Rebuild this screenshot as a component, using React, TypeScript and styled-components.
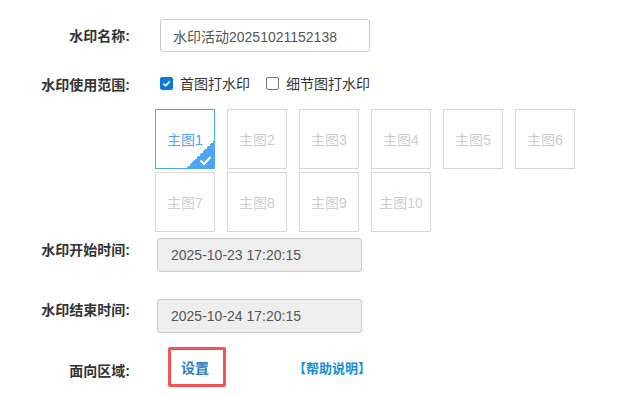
import styled, { createGlobalStyle } from "styled-components";

const GlobalStyle = createGlobalStyle`
  body {
    margin: 0;
    background: #fff;
    font-family: "Liberation Sans", "Noto Sans CJK SC", sans-serif;
  }
`;

const Form = styled.div`
  padding-top: 19px;
  width: 618px;
`;

const Row = styled.div<{ $align?: string; $mt?: number }>`
  display: flex;
  align-items: ${(p) => p.$align || "center"};
  margin-top: ${(p) => p.$mt || 0}px;
`;

const Label = styled.div<{ $pt?: number }>`
  width: 130px;
  flex-shrink: 0;
  text-align: right;
  font-size: 14px;
  font-weight: bold;
  color: #333;
  padding-top: ${(p) => p.$pt || 0}px;
  line-height: 18px;
`;

const TextInput = styled.div`
  margin-left: 30px;
  width: 210px;
  height: 33px;
  box-sizing: border-box;
  border: 1px solid #ccc;
  border-radius: 3px;
  padding-left: 12px;
  display: flex;
  align-items: center;
  font-size: 14px;
  color: #555;
`;

const DateInput = styled.div`
  margin-left: 27px;
  width: 205px;
  height: 34px;
  box-sizing: border-box;
  border: 1px solid #ccc;
  border-radius: 3px;
  background: #eee;
  padding-left: 13px;
  display: flex;
  align-items: center;
  font-size: 14px;
  color: #555;
`;

const Checks = styled.div`
  margin-left: 30px;
  display: flex;
  align-items: center;
  gap: 16px;
`;

const CheckItem = styled.label`
  display: flex;
  align-items: center;
  gap: 7px;
  font-size: 14px;
  color: #333;
`;

const Box = styled.span<{ $on?: boolean }>`
  width: 13px;
  height: 13px;
  box-sizing: border-box;
  border-radius: 2px;
  border: 1px solid ${(p) => (p.$on ? "#0b78d6" : "#767676")};
  background: ${(p) => (p.$on ? "#0b78d6" : "#fff")};
  display: flex;
  align-items: center;
  justify-content: center;
`;

const Thumbs = styled.div`
  margin-left: 155px;
  margin-top: 15px;
  display: grid;
  grid-template-columns: repeat(6, 60px);
  column-gap: 12px;
  row-gap: 3px;
`;

const Thumb = styled.div<{ $on?: boolean }>`
  position: relative;
  width: 60px;
  height: 60px;
  box-sizing: border-box;
  border: 1px solid ${(p) => (p.$on ? "#4ea4f6" : "#dad5d5")};
  color: ${(p) => (p.$on ? "#4ea4f6" : "#ccc")};
  font-size: 14px;
  display: flex;
  align-items: center;
  justify-content: center;
  overflow: hidden;
`;

const Corner = styled.div`
  position: absolute;
  right: 0;
  bottom: 0;
  width: 27px;
  height: 27px;
  background: linear-gradient(135deg, transparent 50%, #4ea4f6 50%);
`;

const CornerCheck = styled.svg`
  position: absolute;
  right: 2px;
  bottom: 2px;
`;

const SetBox = styled.div`
  margin-left: 38px;
  width: 58px;
  height: 40px;
  box-sizing: border-box;
  border: 3px solid #f25454;
  border-radius: 2px;
  display: flex;
  align-items: center;
  padding-left: 10px;
  font-size: 14px;
  font-weight: bold;
  color: #2e7bbf;
`;

const Help = styled.span`
  margin-left: 67px;
  font-size: 13px;
  font-weight: bold;
  color: #168fd6;
`;

const thumbs = ["主图1", "主图2", "主图3", "主图4", "主图5", "主图6", "主图7", "主图8", "主图9", "主图10"];

export default function App() {
  return (
    <>
      <GlobalStyle />
      <Form>
        <Row>
          <Label>水印名称:</Label>
          <TextInput>水印活动20251021152138</TextInput>
        </Row>
        <Row $mt={20}>
          <Label $pt={4}>水印使用范围:</Label>
          <Checks>
            <CheckItem>
              <Box $on>
                <svg width="9" height="9" viewBox="0 0 10 10">
                  <path d="M1.5 5.2 L4 7.5 L8.6 2.6" stroke="#fff" strokeWidth="1.8" fill="none" />
                </svg>
              </Box>
              首图打水印
            </CheckItem>
            <CheckItem>
              <Box />
              细节图打水印
            </CheckItem>
          </Checks>
        </Row>
        <Thumbs>
          {thumbs.map((t, i) => (
            <Thumb key={t} $on={i === 0}>
              {t}
              {i === 0 && (
                <>
                  <Corner />
                  <CornerCheck width="13" height="11" viewBox="0 0 13 11">
                    <path d="M1.5 5.5 L5 9 L11.5 2" stroke="#fff" strokeWidth="2" fill="none" />
                  </CornerCheck>
                </>
              )}
            </Thumb>
          ))}
        </Thumbs>
        <Row $align="flex-start" $mt={6}>
          <Label $pt={3}>水印开始时间:</Label>
          <DateInput>2025-10-23 17:20:15</DateInput>
        </Row>
        <Row $align="flex-start" $mt={27}>
          <Label $pt={2}>水印结束时间:</Label>
          <DateInput>2025-10-24 17:20:15</DateInput>
        </Row>
        <Row $mt={14}>
          <Label $pt={8}>面向区域:</Label>
          <SetBox>设置</SetBox>
          <Help>【帮助说明】</Help>
        </Row>
      </Form>
    </>
  );
}
